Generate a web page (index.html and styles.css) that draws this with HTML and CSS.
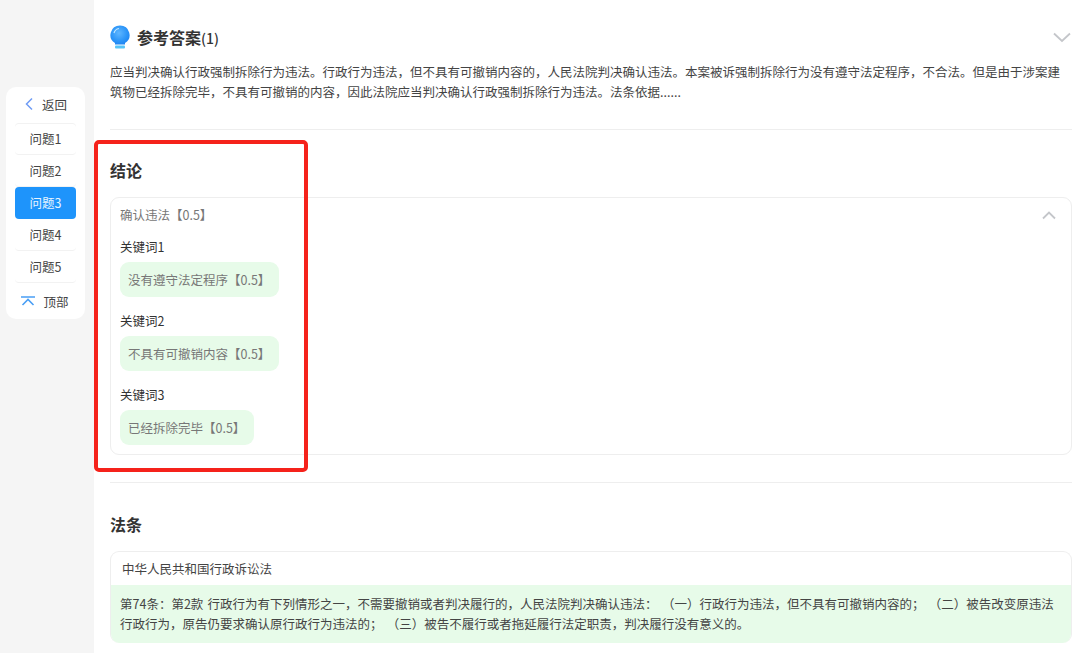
FILE: index.html
```html
<!DOCTYPE html>
<html lang="zh-CN">
<head>
<meta charset="utf-8">
<title>参考答案</title>
<link rel="stylesheet" href="styles.css">
</head>
<body>
<div class="page">
  <aside class="rail">
    <nav class="nav">
      <a class="nav-tool back">
        <svg class="ico-back" viewBox="0 0 10 14"><path d="M8 1.500 2.500 7 8 12.500" fill="none" stroke="#6f9cf5" stroke-width="1.500"/></svg>
        <span>返回</span>
      </a>
      <a class="nav-item first">问题1</a>
      <a class="nav-item">问题2</a>
      <a class="nav-item active">问题3</a>
      <a class="nav-item">问题4</a>
      <a class="nav-item">问题5</a>
      <a class="nav-tool">
        <svg class="ico-top" viewBox="0 0 14 10"><path d="M0 1h14M1.500 9 7 3.500l5.500 5.500" fill="none" stroke="#4a9ff5" stroke-width="1.600"/></svg>
        <span>顶部</span>
      </a>
    </nav>
  </aside>
  <main class="main">
    <section class="answer">
      <header class="answer-head">
        <svg class="bulb" viewBox="0 0 20 24">
          <defs>
            <radialGradient id="b" cx="0.45" cy="0.4" r="0.7">
              <stop offset="0" stop-color="#5fb6ff"/>
              <stop offset="0.6" stop-color="#2c95f8"/>
              <stop offset="1" stop-color="#1a7ff0"/>
            </radialGradient>
          </defs>
          <path d="M10 0.500a9.500 9.500 0 0 1 5 17.600V19.500H5v-1.400A9.500 9.500 0 0 1 10 0.500z" fill="url(#b)"/>
          <path d="M4 8a6.500 6.500 0 0 1 5-4.500" fill="none" stroke="#bfe6ff" stroke-width="1.200"/>
          <rect x="5" y="20.500" width="10" height="3" rx="1" fill="#56c4f8"/>
        </svg>
        <h2 class="answer-title">参考答案<span class="count">(1)</span></h2>
        <svg class="chev-down" viewBox="0 0 18 11"><path d="M1 1.500 9 9l8-7.500" fill="none" stroke="#c4c6ca" stroke-width="1.800"/></svg>
      </header>
      <p class="answer-text">应当判决确认行政强制拆除行为违法。行政行为违法，但不具有可撤销内容的，人民法院判决确认违法。本案被诉强制拆除行为没有遵守法定程序，不合法。但是由于涉案建筑物已经拆除完毕，不具有可撤销的内容，因此法院应当判决确认行政强制拆除行为违法。法条依据......</p>
    </section>
    <section class="block conclusion">
      <h3 class="block-title">结论</h3>
      <div class="card">
        <div class="card-head">
          <span class="card-name">确认违法【0.5】</span>
          <svg class="chev-up" viewBox="0 0 14 9"><path d="M1 7.500 7 1.500l6 6" fill="none" stroke="#c4c6ca" stroke-width="1.800"/></svg>
        </div>
        <div class="kw"><div class="kw-label">关键词1</div><div class="tag">没有遵守法定程序【0.5】</div></div>
        <div class="kw"><div class="kw-label">关键词2</div><div class="tag">不具有可撤销内容【0.5】</div></div>
        <div class="kw"><div class="kw-label">关键词3</div><div class="tag">已经拆除完毕【0.5】</div></div>
      </div>
    </section>
    <section class="block law">
      <h3 class="block-title">法条</h3>
      <div class="law-card">
        <div class="law-name">中华人民共和国行政诉讼法</div>
        <p class="law-text">第74条：第2款 行政行为有下列情形之一，不需要撤销或者判决履行的，人民法院判决确认违法： （一）行政行为违法，但不具有可撤销内容的； （二）被告改变原违法行政行为，原告仍要求确认原行政行为违法的； （三）被告不履行或者拖延履行法定职责，判决履行没有意义的。</p>
      </div>
    </section>
  </main>
  <div class="highlight"></div>
</div>
</body>
</html>
```

FILE: styles.css
```css
* { box-sizing: border-box; }
html, body { margin: 0; height: 100%; }
body {
  background: #f5f5f5;
  font-family: "Noto Sans CJK SC", "Noto Sans", sans-serif;
  color: #333;
  font-size: 12.5px;
  text-spacing-trim: space-all;
  overflow: hidden;
}
.page { position: relative; display: flex; height: 653px; overflow: hidden; }
.rail { width: 94px; flex: none; padding: 87px 0 0 6px; }
.nav {
  width: 79px;
  background: #fff;
  border-radius: 10px;
  padding: 0 9px;
  display: flex;
  flex-direction: column;
}
.nav-tool {
  height: 36px;
  display: flex;
  align-items: center;
  justify-content: center;
  gap: 8px;
  color: #444;
}
.nav-tool.back { padding-bottom: 2px; }
.ico-back { width: 10px; height: 14px; }
.ico-top { width: 14px; height: 10px; margin-left: -1px; }
.nav-item {
  height: 32px;
  display: flex;
  align-items: center;
  justify-content: center;
  border-bottom: 1px solid #f2f2f2;
  color: #444;
  border-radius: 4px;
}
.nav-item.first { box-shadow: inset 0 1px 0 #f2f2f2; }
.nav-item.active { background: #1e94fb; color: #e8f4ff; border-bottom-color: transparent; }
.main { flex: 1; background: #fff; padding: 0 8px 0 16px; min-width: 0; }
.answer { height: 130px; padding-top: 25px; border-bottom: 1px solid #eee; }
.answer-head { display: flex; align-items: center; height: 24px; }
.bulb { width: 20px; height: 24px; flex: none; }
.answer-title { margin: 0 0 0 7px; font-size: 16px; font-weight: 700; color: #333; flex: 1; line-height: 24px; }
.count { font-size: 14px; font-weight: 500; }
.chev-down { width: 18px; height: 11px; flex: none; margin-right: 1px; }
.answer-text { margin: 13px 0 0; line-height: 20px; color: #444; }
.conclusion { height: 353px; padding-top: 28px; border-bottom: 1px solid #eee; }
.block-title { margin: 0; font-size: 16px; font-weight: 700; line-height: 24px; color: #333; }
.card {
  margin-top: 15px;
  height: 258px;
  border: 1px solid #eee;
  border-radius: 9px;
  padding: 0 9px;
}
.card-head { display: flex; align-items: center; justify-content: space-between; height: 34px; padding-right: 6px; margin-bottom: 5px; }
.card-name { color: #777; margin-top: -2px; }
.chev-up { width: 14px; height: 9px; }
.kw + .kw { margin-top: 14px; }
.kw-label { line-height: 20px; color: #333; }
.tag {
  width: fit-content;
  margin-top: 5px;
  height: 35px;
  line-height: 35px;
  padding: 0 9px 0 8px;
  background: #e7fbe9;
  border-radius: 9px;
  color: #777;
}
.law { padding-top: 29px; }
.law-card { margin-top: 15px; border: 1px solid #eee; border-bottom: 0; border-radius: 9px; overflow: hidden; }
.law-name { height: 33px; line-height: 33px; padding: 0 11px; color: #444; }
.law-text { margin: 0; background: #e7fbe9; padding: 9px; line-height: 20px; color: #444; word-spacing: 1.500px; }
.highlight {
  position: absolute;
  left: 94px;
  top: 140px;
  width: 214px;
  height: 332px;
  border: 4px solid #f5221b;
  border-radius: 5px;
  pointer-events: none;
}
```
